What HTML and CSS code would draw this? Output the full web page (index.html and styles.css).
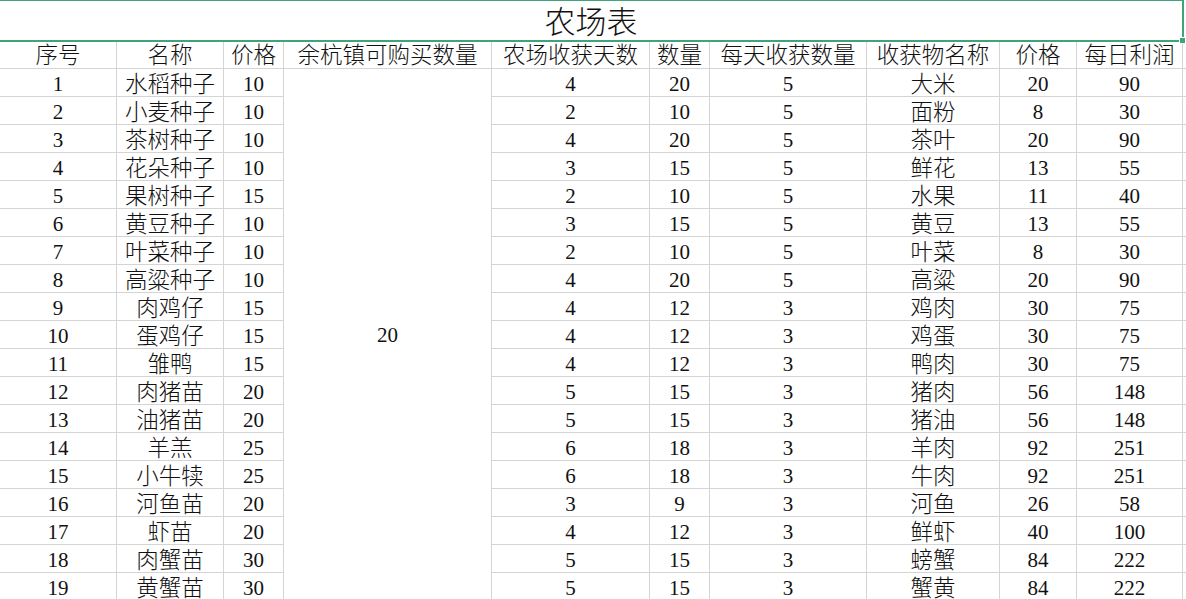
FILE: index.html
```html
<!DOCTYPE html>
<html lang="zh-CN">
<head>
<meta charset="utf-8">
<title>农场表</title>
<link rel="stylesheet" href="styles.css">
</head>
<body>
<div class="sheet">
  <div class="title">农场表</div>
  <div class="grid">
    <div class="c h">序号</div><div class="c h">名称</div><div class="c h">价格</div><div class="c h">余杭镇可购买数量</div><div class="c h">农场收获天数</div><div class="c h">数量</div><div class="c h">每天收获数量</div><div class="c h">收获物名称</div><div class="c h">价格</div><div class="c h">每日利润</div><div class="c h last"></div>
    <div class="c merged">20</div>
    <div class="c">1</div><div class="c z">水稻种子</div><div class="c">10</div><div class="c">4</div><div class="c">20</div><div class="c">5</div><div class="c z">大米</div><div class="c">20</div><div class="c">90</div><div class="c last"></div>
    <div class="c">2</div><div class="c z">小麦种子</div><div class="c">10</div><div class="c">2</div><div class="c">10</div><div class="c">5</div><div class="c z">面粉</div><div class="c">8</div><div class="c">30</div><div class="c last"></div>
    <div class="c">3</div><div class="c z">茶树种子</div><div class="c">10</div><div class="c">4</div><div class="c">20</div><div class="c">5</div><div class="c z">茶叶</div><div class="c">20</div><div class="c">90</div><div class="c last"></div>
    <div class="c">4</div><div class="c z">花朵种子</div><div class="c">10</div><div class="c">3</div><div class="c">15</div><div class="c">5</div><div class="c z">鲜花</div><div class="c">13</div><div class="c">55</div><div class="c last"></div>
    <div class="c">5</div><div class="c z">果树种子</div><div class="c">15</div><div class="c">2</div><div class="c">10</div><div class="c">5</div><div class="c z">水果</div><div class="c">11</div><div class="c">40</div><div class="c last"></div>
    <div class="c">6</div><div class="c z">黄豆种子</div><div class="c">10</div><div class="c">3</div><div class="c">15</div><div class="c">5</div><div class="c z">黄豆</div><div class="c">13</div><div class="c">55</div><div class="c last"></div>
    <div class="c">7</div><div class="c z">叶菜种子</div><div class="c">10</div><div class="c">2</div><div class="c">10</div><div class="c">5</div><div class="c z">叶菜</div><div class="c">8</div><div class="c">30</div><div class="c last"></div>
    <div class="c">8</div><div class="c z">高粱种子</div><div class="c">10</div><div class="c">4</div><div class="c">20</div><div class="c">5</div><div class="c z">高粱</div><div class="c">20</div><div class="c">90</div><div class="c last"></div>
    <div class="c">9</div><div class="c z">肉鸡仔</div><div class="c">15</div><div class="c">4</div><div class="c">12</div><div class="c">3</div><div class="c z">鸡肉</div><div class="c">30</div><div class="c">75</div><div class="c last"></div>
    <div class="c">10</div><div class="c z">蛋鸡仔</div><div class="c">15</div><div class="c">4</div><div class="c">12</div><div class="c">3</div><div class="c z">鸡蛋</div><div class="c">30</div><div class="c">75</div><div class="c last"></div>
    <div class="c">11</div><div class="c z">雏鸭</div><div class="c">15</div><div class="c">4</div><div class="c">12</div><div class="c">3</div><div class="c z">鸭肉</div><div class="c">30</div><div class="c">75</div><div class="c last"></div>
    <div class="c">12</div><div class="c z">肉猪苗</div><div class="c">20</div><div class="c">5</div><div class="c">15</div><div class="c">3</div><div class="c z">猪肉</div><div class="c">56</div><div class="c">148</div><div class="c last"></div>
    <div class="c">13</div><div class="c z">油猪苗</div><div class="c">20</div><div class="c">5</div><div class="c">15</div><div class="c">3</div><div class="c z">猪油</div><div class="c">56</div><div class="c">148</div><div class="c last"></div>
    <div class="c">14</div><div class="c z">羊羔</div><div class="c">25</div><div class="c">6</div><div class="c">18</div><div class="c">3</div><div class="c z">羊肉</div><div class="c">92</div><div class="c">251</div><div class="c last"></div>
    <div class="c">15</div><div class="c z">小牛犊</div><div class="c">25</div><div class="c">6</div><div class="c">18</div><div class="c">3</div><div class="c z">牛肉</div><div class="c">92</div><div class="c">251</div><div class="c last"></div>
    <div class="c">16</div><div class="c z">河鱼苗</div><div class="c">20</div><div class="c">3</div><div class="c">9</div><div class="c">3</div><div class="c z">河鱼</div><div class="c">26</div><div class="c">58</div><div class="c last"></div>
    <div class="c">17</div><div class="c z">虾苗</div><div class="c">20</div><div class="c">4</div><div class="c">12</div><div class="c">3</div><div class="c z">鲜虾</div><div class="c">40</div><div class="c">100</div><div class="c last"></div>
    <div class="c">18</div><div class="c z">肉蟹苗</div><div class="c">30</div><div class="c">5</div><div class="c">15</div><div class="c">3</div><div class="c z">螃蟹</div><div class="c">84</div><div class="c">222</div><div class="c last"></div>
    <div class="c">19</div><div class="c z">黄蟹苗</div><div class="c">30</div><div class="c">5</div><div class="c">15</div><div class="c">3</div><div class="c z">蟹黄</div><div class="c">84</div><div class="c">222</div><div class="c last"></div>
  </div>
</div>
</body>
</html>
```
FILE: styles.css
```css
html, body {
  margin: 0;
  padding: 0;
  background: #ffffff;
  overflow: hidden;
}
.sheet {
  margin-top: -1px;
  font-family: "Liberation Serif", "Noto Sans CJK SC", serif;
  color: #111;
  font-size: 21px;
}
.title {
  position: relative;
  box-sizing: border-box;
  margin-left: -2px;
  width: 1186px;
  height: 43px;
  border: 2px solid #3fa47a;
  text-align: center;
  font-size: 31px;
  font-weight: 300;
  line-height: 41px;
  padding-top: 1px;
}
.title::after {
  content: "";
  position: absolute;
  right: -4px;
  bottom: -4px;
  width: 5px;
  height: 5px;
  background: #3fa47a;
  border: 1px solid #fff;
}
.grid {
  display: grid;
  grid-template-columns: 117px 107px 60px 208px 158px 60px 157px 133px 77px 106px 1fr;
  grid-template-rows: 27px repeat(19, 28px);
}
.c {
  box-sizing: border-box;
  border-right: 1px solid #d4d4d4;
  border-bottom: 1px solid #d4d4d4;
  text-align: center;
  line-height: 27px;
  padding-top: 2px;
  white-space: nowrap;
  overflow: hidden;
}
.h,
.z {
  font-size: 22.5px;
  font-weight: 300;
}
.h {
  line-height: 26px;
  padding-top: 1px;
}
.merged {
  grid-column: 4;
  grid-row: 2 / span 19;
  border-bottom: none;
  display: flex;
  align-items: center;
  justify-content: center;
  padding-top: 0;
}
.last {
  border-right: none;
}
```
